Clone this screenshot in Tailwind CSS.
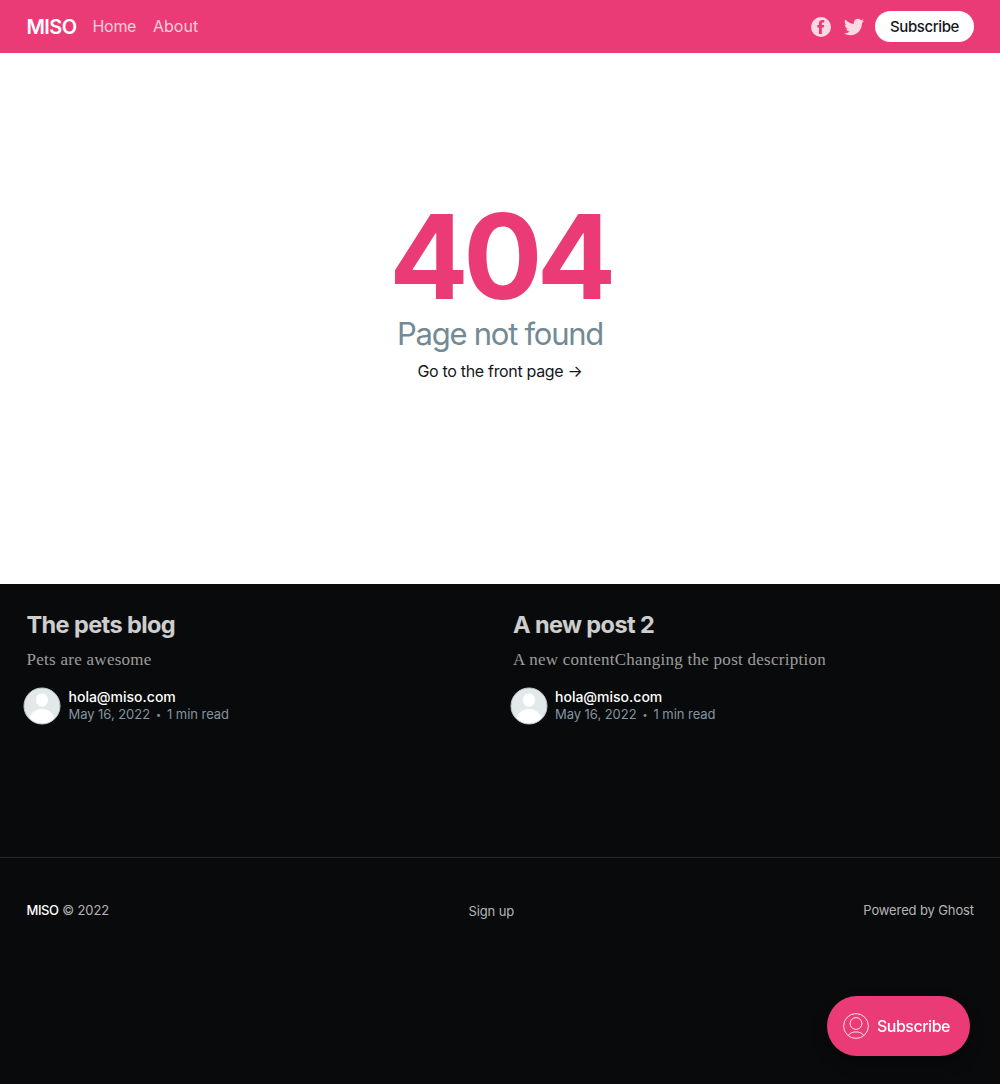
<!DOCTYPE html>
<html lang="en">
<head>
<meta charset="utf-8">
<title>MISO</title>
<script src="https://cdn.jsdelivr.net/npm/@tailwindcss/browser@4"></script>
</head>
<body class="bg-white font-['Inter',sans-serif] h-[1084px] overflow-hidden flex flex-col antialiased">
<header class="h-[53px] shrink-0 bg-[#eb3b76] flex items-center pl-[26.5px] pr-[26px] text-white">
  <a class="text-[20px] leading-6 font-semibold tracking-[-0.6px] w-[66px] whitespace-nowrap pt-px">MISO</a>
  <a class="text-[16px] w-[60.500px] text-white/75 whitespace-nowrap tracking-[-0.3px] pb-px">Home</a>
  <a class="text-[16px] text-white/75 whitespace-nowrap pb-px">About</a>
  <div class="ml-auto flex items-center">
    <svg class="size-5 mr-[13px] text-white/80" viewBox="0 0 32 32" fill="currentColor"><path d="M16 0a16 16 0 1 0 0 32 16 16 0 0 0 0-32zm5.200 8.900h-1.900c-1.500 0-1.900.5-1.900 1.500V12.800h3.800l-.4 4h-3.400V27h-4.700V16.800H10V12.800h2.700v-2.500c0-3.300 1.700-5.400 5.100-5.400h3.400z"/></svg>
    <svg class="size-5 mr-[11px] text-white/80" viewBox="0 0 24 24" fill="currentColor"><path d="M24 4.557a9.830 9.830 0 0 1-2.828.775 4.932 4.932 0 0 0 2.165-2.724 9.864 9.864 0 0 1-3.127 1.195 4.916 4.916 0 0 0-8.384 4.482A13.980 13.980 0 0 1 1.671 3.149a4.930 4.930 0 0 0 1.523 6.574 4.903 4.903 0 0 1-2.229-.616c-.054 2.281 1.581 4.415 3.949 4.890a4.935 4.935 0 0 1-2.224.084 4.928 4.928 0 0 0 4.600 3.419A9.900 9.900 0 0 1 0 19.540a13.940 13.940 0 0 0 7.548 2.212c9.142 0 14.307-7.721 13.995-14.646A10.025 10.025 0 0 0 24 4.557z"/></svg>
    <a class="w-[99px] h-[31px] rounded-full bg-white text-[#15171a] text-[15px] font-medium tracking-[-0.4px] flex items-center justify-center pt-px">Subscribe</a>
  </div>
</header>
<main class="h-[531px] shrink-0 flex flex-col items-center pt-[143px]">
  <h1 class="text-[117.500px] leading-[120px] font-bold text-[#eb3b76] tracking-[-5.500px]">404</h1>
  <p class="text-[31px] leading-[38px] text-[#738a94] tracking-[-1.25px] whitespace-nowrap -mt-px">Page not found</p>
  <a class="text-[16px] leading-6 text-[#15171a] mt-[6px] whitespace-nowrap tracking-[-0.32px]">Go to the front page →</a>
</main>
<section class="h-[273px] shrink-0 bg-[#090a0b] grid grid-cols-[486.5px_1fr] pl-[26.5px] pt-[26px]">
  <article>
    <h2 class="text-[23.500px] leading-[30px] font-bold text-white/80 tracking-[-0.6px]">The pets blog</h2>
    <p class="font-['Liberation_Serif',serif] text-[17px] leading-6 text-white/60 mt-[8px] tracking-[0.27px]">Pets are awesome</p>
    <div class="flex items-center -ml-[2.500px] mt-[15px]">
      <svg class="size-[38px] -ml-px mr-[7.500px]" viewBox="0 0 38 38"><circle cx="19" cy="19" r="18" fill="#e3e9eb" stroke="#c5c8ca"/><ellipse cx="19" cy="13" rx="6" ry="6.800" fill="#fff"/><path d="M6.500 31c2-6 7-9 12.500-9s10.500 3 12.500 9A17.500 17.500 0 0 1 6.500 31z" fill="#fff"/></svg>
      <div class="whitespace-nowrap pb-[2px]">
        <div class="text-[14px] leading-[18px] font-medium text-white">hola@miso.com</div>
        <div class="text-[13px] leading-[17px] text-[#8394a0] flex items-center tracking-[-0.05px]"><span>May 16, 2022</span><span class="w-[17px] text-center text-[9px]">•</span><span>1 min read</span></div>
      </div>
    </div>
  </article>
  <article>
    <h2 class="text-[23.500px] leading-[30px] font-bold text-white/80 tracking-[-0.6px]">A new post 2</h2>
    <p class="font-['Liberation_Serif',serif] text-[17px] leading-6 text-white/60 mt-[8px] whitespace-nowrap tracking-[0.27px]">A new contentChanging the post description</p>
    <div class="flex items-center -ml-[2.500px] mt-[15px]">
      <svg class="size-[38px] -ml-px mr-[7.500px]" viewBox="0 0 38 38"><circle cx="19" cy="19" r="18" fill="#e3e9eb" stroke="#c5c8ca"/><ellipse cx="19" cy="13" rx="6" ry="6.800" fill="#fff"/><path d="M6.500 31c2-6 7-9 12.500-9s10.500 3 12.500 9A17.500 17.500 0 0 1 6.500 31z" fill="#fff"/></svg>
      <div class="whitespace-nowrap pb-[2px]">
        <div class="text-[14px] leading-[18px] font-medium text-white">hola@miso.com</div>
        <div class="text-[13px] leading-[17px] text-[#8394a0] flex items-center tracking-[-0.05px]"><span>May 16, 2022</span><span class="w-[17px] text-center text-[9px]">•</span><span>1 min read</span></div>
      </div>
    </div>
  </article>
</section>
<footer class="h-[227px] shrink-0 bg-[#090a0b] border-t border-[#28292a] flex justify-between items-start pl-[26.5px] pr-[26px] pt-[42px] text-[13px] leading-5 text-white/70 tracking-[-0.12px]">
  <div class="w-[200px]"><span class="text-white font-medium tracking-[-0.4px]">MISO</span> © 2022</div>
  <a class="pt-px -ml-[18px]">Sign up</a>
  <div class="w-[200px] text-right">Powered by Ghost</div>
</footer>
<a class="fixed left-[827px] top-[996px] w-[143px] h-[60px] rounded-full bg-[#eb3b76] flex items-center pl-[16px] text-white text-[16px] font-medium shadow-[0_8px_16px_-2px_rgba(0,0,0,0.4)]">
  <svg class="size-[26px] mr-2" viewBox="0 0 26 26" fill="none" stroke="currentColor" stroke-opacity=".85"><circle cx="13" cy="13" r="12.400"/><circle cx="13" cy="10.500" r="5.900"/><path d="M5.300 22.500c1.500-2.500 4.500-3.600 7.700-3.600s6.200 1.100 7.700 3.600"/></svg>
  <span class="tracking-[-0.5px]">Subscribe</span>
</a>
</body>
</html>
